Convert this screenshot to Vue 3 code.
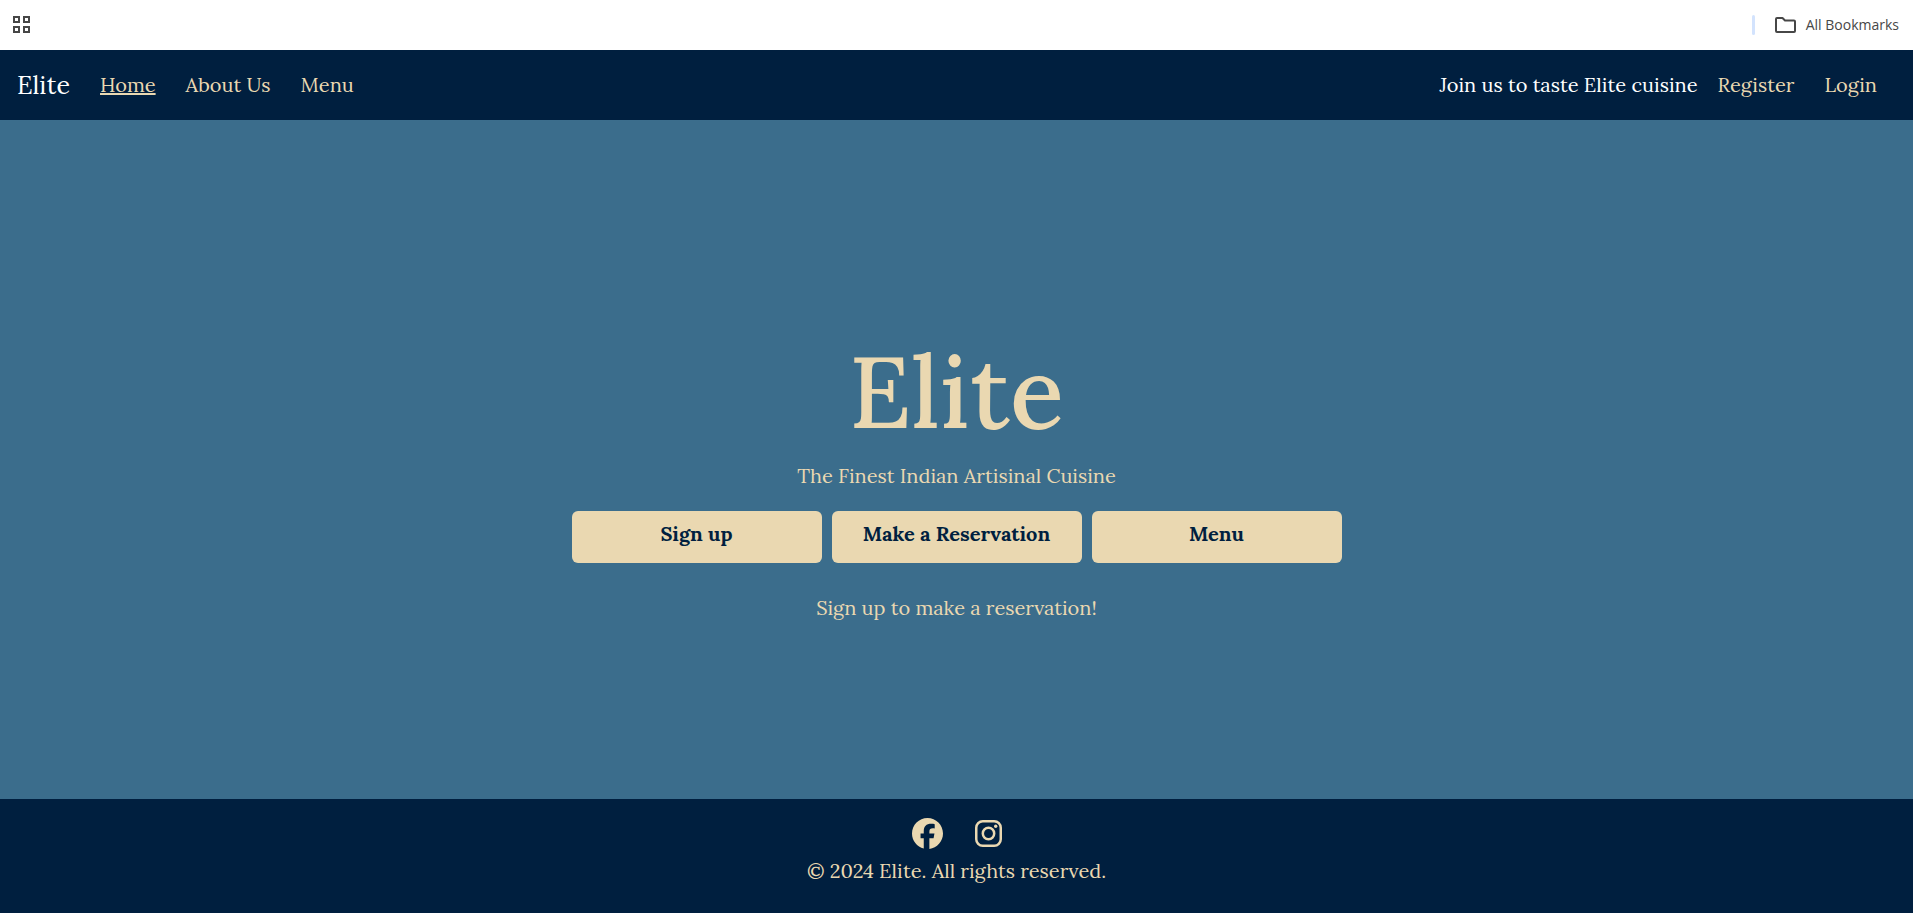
<script setup>
const pages = [
  { label: 'Home', active: true },
  { label: 'About Us', active: false },
  { label: 'Menu', active: false }
]
const account = ['Register', 'Login']
const actions = ['Sign up', 'Make a Reservation', 'Menu']
</script>

<template>
  <div class="page">
    <div class="bookmarks">
      <button type="button" class="tool" aria-label="Tab groups">
        <svg width="20" height="20" viewBox="0 0 20 20" fill="none" stroke="#474747" stroke-width="2">
          <rect x="2" y="2" width="5" height="5" />
          <rect x="12" y="2" width="5" height="5" />
          <rect x="2" y="12" width="5" height="5" />
          <rect x="12" y="12" width="5" height="5" />
        </svg>
      </button>
      <div class="bookmarks-end">
        <span class="divider"></span>
        <button type="button" class="tool folder">
          <svg width="21" height="16" viewBox="0 0 21 16" fill="none" stroke="#474747" stroke-width="2" stroke-linejoin="round">
            <path d="M2 1H7.500L10 3.500H19Q20 3.500 20 4.500V14Q20 15 19 15H2Q1 15 1 14V2Q1 1 2 1Z" />
          </svg>
          <span>All Bookmarks</span>
        </button>
      </div>
    </div>

    <header class="navbar">
      <a href="#" class="brand">Elite</a>
      <nav class="links">
        <a v-for="p in pages" :key="p.label" href="#" :class="{ active: p.active }">{{ p.label }}</a>
      </nav>
      <div class="account">
        <span class="invite">Join us to taste Elite cuisine</span>
        <a v-for="a in account" :key="a" href="#">{{ a }}</a>
      </div>
    </header>

    <main class="hero">
      <h1>Elite</h1>
      <p class="tagline">The Finest Indian Artisinal Cuisine</p>
      <div class="actions">
        <button v-for="a in actions" :key="a" type="button">{{ a }}</button>
      </div>
      <p class="note">Sign up to make a reservation!</p>
    </main>

    <footer class="footer">
      <div class="social">
        <a href="#" aria-label="Facebook">
          <svg width="31" height="31" viewBox="0 0 512 512" fill="currentColor">
            <path d="M512 256C512 114.600 397.400 0 256 0S0 114.600 0 256C0 376 82.700 476.800 194.200 504.500V334.200H141.400V256H194.200V222.300C194.200 135.200 233.600 94.800 319.200 94.800C335.400 94.800 363.400 98 374.900 101.200V172C368.900 171.400 358.400 171 345.300 171C303.300 171 287.100 186.900 287.100 228.200V256H370.700L356.300 334.200H287V510.100C413.800 494.800 512 386.900 512 256Z" />
          </svg>
        </a>
        <a href="#" aria-label="Instagram">
          <svg width="27" height="27" viewBox="0 0 27 27" fill="none" stroke="currentColor">
            <rect x="1.250" y="1.250" width="24.500" height="24.500" rx="6.500" stroke-width="2.500" />
            <circle cx="13.500" cy="13.500" r="5.700" stroke-width="2.500" />
            <circle cx="20.700" cy="6.300" r="1.700" fill="currentColor" stroke="none" />
          </svg>
        </a>
      </div>
      <p>© 2024 Elite. All rights reserved.</p>
    </footer>
  </div>
</template>

<style>
body {
  margin: 0;
}
</style>

<style scoped>
.page {
  display: flex;
  flex-direction: column;
  min-height: 100vh;
  background: #3b6d8c;
  color: #ead8b1;
  font-family: Lora, "Liberation Serif", serif;
  font-size: 20px;
  line-height: 30px;
}

a {
  color: inherit;
  text-decoration: none;
}

p,
h1 {
  margin: 0;
}

button {
  border: 0;
  cursor: pointer;
}

.bookmarks {
  display: flex;
  align-items: center;
  justify-content: space-between;
  height: 50px;
  padding: 0 14px 0 12px;
  box-sizing: border-box;
  background: #ffffff;
}

.tool {
  display: flex;
  align-items: center;
  gap: 10px;
  padding: 0;
  background: none;
  color: #474747;
  font: 14px/20px "Segoe UI", "Open Sans", sans-serif;
}

.bookmarks-end {
  display: flex;
  align-items: center;
  gap: 20px;
}

.divider {
  width: 3px;
  height: 20px;
  border-radius: 2px;
  background: #d3e3fd;
}

.navbar {
  display: flex;
  align-items: center;
  height: 70px;
  padding: 0 36px 0 17px;
  box-sizing: border-box;
  background: #001f3f;
}

.brand {
  color: #ffffff;
  font-size: 25px;
}

.links {
  display: flex;
  gap: 30px;
  margin-left: 30px;
}

.links .active {
  text-decoration: underline;
}

.account {
  display: flex;
  gap: 30px;
  margin-left: auto;
}

.invite {
  margin-right: -10px;
  color: #ffffff;
}

.hero {
  flex: 1;
  display: flex;
  flex-direction: column;
  align-items: center;
  justify-content: center;
  padding-top: 34px;
}

.hero h1 {
  font-size: 100px;
  font-weight: 500;
  line-height: 120px;
}

.tagline {
  margin-top: 10px;
}

.actions {
  display: flex;
  gap: 10px;
  margin: 20px 0 30px;
}

.actions button {
  width: 250px;
  height: 52px;
  padding: 0 0 6px;
  border-radius: 6px;
  background: #ead8b1;
  color: #001f3f;
  font: bold 20px/30px Lora, "Liberation Serif", serif;
}

.footer {
  display: flex;
  flex-direction: column;
  align-items: center;
  gap: 7px;
  padding: 19px 0 27px;
  background: #001f3f;
}

.social {
  display: flex;
  align-items: center;
  gap: 32px;
}

.social svg {
  display: block;
}
</style>
